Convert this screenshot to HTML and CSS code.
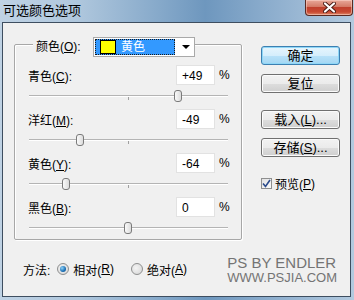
FILE: index.html
```html
<!DOCTYPE html>
<html>
<head>
<meta charset="utf-8">
<title>可选颜色选项</title>
<link rel="stylesheet" href="styles.css">
</head>
<body>
<div class="win">
	<div class="titlebar">
		<span class="title">可选颜色选项</span>
		<span class="close"><svg width="13" height="11" viewBox="0 0 13 11"><path d="M2 1.5 L11 9.5 M11 1.5 L2 9.5" stroke="#4a1a14" stroke-width="4" stroke-linecap="round"/><path d="M2 1.5 L11 9.5 M11 1.5 L2 9.5" stroke="#fff" stroke-width="2.2" stroke-linecap="round"/></svg></span>
	</div>
	<div class="client">
		<div class="main">
			<div class="group">
				<div class="group-head">
					<span class="head-label">颜色(<u>O</u>):</span>
					<div class="combo">
						<span class="combo-sel"><i class="swatch"></i>黄色</span>
						<span class="combo-arrow"></span>
					</div>
				</div>
				<div class="row">
					<div class="field"><label>青色(<u>C</u>):</label><span class="num">+49</span><span class="pct">%</span></div>
					<div class="slider"><span class="track"></span><span class="thumb" style="left:145px"></span></div>
				</div>
				<div class="row">
					<div class="field"><label>洋红(<u>M</u>):</label><span class="num">-49</span><span class="pct">%</span></div>
					<div class="slider"><span class="track"></span><span class="thumb" style="left:47px"></span></div>
				</div>
				<div class="row">
					<div class="field"><label>黄色(<u>Y</u>):</label><span class="num">-64</span><span class="pct">%</span></div>
					<div class="slider"><span class="track"></span><span class="thumb" style="left:33px"></span></div>
				</div>
				<div class="row">
					<div class="field"><label>黑色(<u>B</u>):</label><span class="num">0</span><span class="pct">%</span></div>
					<div class="slider"><span class="track"></span><span class="thumb" style="left:95px"></span></div>
				</div>
			</div>
			<div class="side">
				<div class="btn default">确定</div>
				<div class="btn">复位</div>
				<div class="btn gap">载入(<u>L</u>)...</div>
				<div class="btn">存储(<u>S</u>)...</div>
				<div class="check"><span class="box"><svg width="9" height="9" viewBox="0 0 9 9"><path d="M1 4.5 L3.5 7.5 L8 1" fill="none" stroke="#2b4b8c" stroke-width="1.6"/></svg></span>预览(<u>P</u>)</div>
			</div>
		</div>
		<div class="bottom">
			<span class="method">方法:</span>
			<span class="radio on"><i></i>相对(<u>R</u>)</span>
			<span class="radio"><i></i>绝对(<u>A</u>)</span>
			<div class="mark">
				<p class="mark1">PS BY ENDLER</p>
				<p class="mark2">WWW.PSJIA.COM</p>
			</div>
		</div>
	</div>
</div>
</body>
</html>
```

FILE: styles.css
```css
*{ margin:0; padding:0; box-sizing:border-box;}
body{ width:354px; height:300px; overflow:hidden; font:12px "Liberation Sans","Noto Sans CJK SC",sans-serif; color:#000;}
u{ text-decoration:underline;}
.win{ width:354px; height:300px; padding:0 3px 0 2px; display:flex; flex-direction:column; background:linear-gradient(90deg,#bfd2e4 0%,#afc7dd 22%,#86a9ca 45%,#6e97be 58%,#8cadcd 76%,#b3cadf 100%);}
.titlebar{ height:22px; display:flex; align-items:flex-start;}
.title{ padding-left:1px; font-size:13px; line-height:20px; font-family:"Noto Sans CJK SC",sans-serif;}
.close{ margin-left:auto; margin-right:-2px; width:48px; height:16px; border:1px solid #5a2a22; border-top:none; border-radius:0 0 4px 4px; display:flex; align-items:center; justify-content:center; background:linear-gradient(#e8a899 0%,#d47a66 45%,#c0402d 50%,#c94a32 80%,#de8a6a 100%); box-shadow:inset 0 0 0 1px rgba(255,220,210,.5);}
.client{ height:275px; background:#f0f0f0; border:1px solid #3e4e60; display:flex; flex-direction:column;}
.main{ display:flex; align-items:flex-start;}
.group{ margin:21px 0 0 11px; width:228px; height:196px; border:1px solid #a7a7a7; border-radius:2px; box-shadow:1px 1px 0 #fff, inset 1px 1px 0 #fff;}
.group-head{ margin-top:-8px; padding-left:18px; display:flex; align-items:center; height:20px;}
.head-label{ width:60px; height:20px; line-height:20px; padding-left:3px; background:#f0f0f0;}
.combo{ width:102px; height:20px; border:1px solid #a9a9a9; background:#fff; padding:1px; display:flex;}
.combo-sel{ width:80px; height:16px; background:#3399ff; color:#fff; border:1px dotted #1a1a1a; display:flex; align-items:center; padding-left:4px; line-height:14px;}
.swatch{ width:16px; height:14px; background:#ffff00; border:1px solid #000; margin-right:5px;}
.combo-arrow{ flex:1; display:flex; align-items:center; justify-content:center; padding-left:3px;}
.combo-arrow:after{ content:""; border-left:4px solid transparent; border-right:4px solid transparent; border-top:4px solid #000;}
.row{ height:44px;}
.group-head + .row{ margin-top:8px;}
.field{ height:20px; display:flex; align-items:center; padding:0 12px 0 13px;}
.field label{ flex:1;}
.num{ width:39px; height:20px; line-height:20px; background:#fff; border:1px solid #e2e2e2; padding-left:5px;}
.pct{ margin-left:4px; width:10px;}
.slider{ height:24px; position:relative; margin-left:14px; width:199px;}
.track{ display:block; position:absolute; left:0; right:0; top:10px; height:2px; border-top:1px solid #b4b4b4; border-bottom:1px solid #fff;}
.track:after{ content:""; position:absolute; left:99px; top:1px; width:1px; height:3px; background:#a0a0a0;}
.thumb{ position:absolute; top:5px; width:8px; height:12px; border:1px solid #7a7a7a; border-radius:3px; background:linear-gradient(90deg,#fafafa,#dcdcdc);}
.side{ margin:23px 0 0 19px; width:79px; display:flex; flex-direction:column;}
.btn{ height:19px; width:79px; margin-bottom:9px; border:1px solid #707070; border-radius:3px; text-align:center; font-size:13px; line-height:17px; background:linear-gradient(#f2f2f2 0%,#ebebeb 50%,#dddddd 51%,#cfcfcf 100%); box-shadow:inset 0 0 0 1px #fbfbfb;}
.btn.default{ border-color:#3c7fb1; background:linear-gradient(#e7f5fd 0%,#d5eefc 50%,#b9e2f9 51%,#a3d6f3 100%); box-shadow:inset 0 0 0 1px #8fd7f7;}
.btn.gap{ margin-top:8px;}
.check{ display:flex; align-items:center; margin-top:9px; font-size:12px;}
.box{ width:11px; height:11px; border:1px solid #8e8f8f; background:linear-gradient(135deg,#e2e2e2,#fbfbfb); margin-right:3px; display:flex; align-items:center; justify-content:center;}
.bottom{ margin-top:14px; height:30px; display:flex; align-items:center; padding-left:20px;}
.method{ margin-right:7px;}
.radio{ display:flex; align-items:center; margin-right:17px;}
.radio i{ width:12px; height:12px; border-radius:50%; border:1px solid #8e8f8f; background:radial-gradient(circle at 40% 40%,#f4f4f4,#d4d4d4); margin-right:4px; display:flex; align-items:center; justify-content:center;}
.radio.on i:after{ content:""; width:6px; height:6px; border-radius:50%; background:radial-gradient(circle at 35% 35%,#8fd2f8,#1a6fb4 60%,#0d4a85);}
.mark{ margin-left:auto; margin-right:13px; color:#747474; font-family:"Liberation Sans",sans-serif;}
.mark1{ font-size:15px; line-height:17px;}
.mark2{ font-size:13px; line-height:14px;}
```
